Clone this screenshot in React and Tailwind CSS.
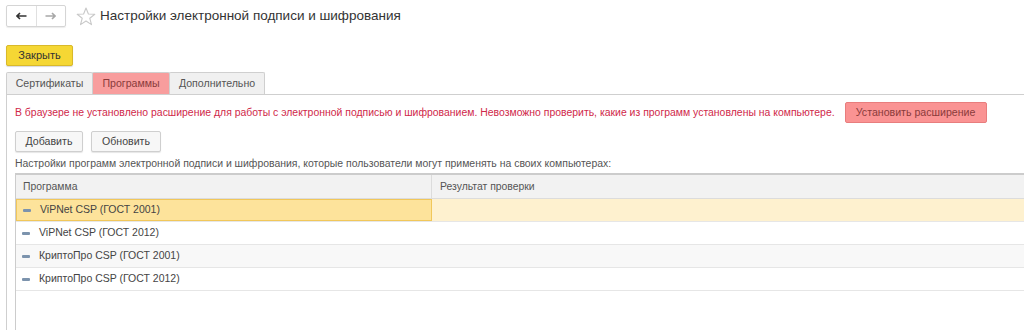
import { useState } from "react";

const programs = [
  "ViPNet CSP (ГОСТ 2001)",
  "ViPNet CSP (ГОСТ 2012)",
  "КриптоПро CSP (ГОСТ 2001)",
  "КриптоПро CSP (ГОСТ 2012)",
];

function Star() {
  return (
    <svg width="20" height="19" viewBox="0 0 20 19" className="shrink-0">
      <path
        d="M10 1 L12.4 7 L18.8 7.3 L13.8 11.3 L15.5 17.6 L10 14 L4.5 17.6 L6.2 11.3 L1.2 7.3 L7.6 7 Z"
        fill="none"
        stroke="#c9c9c9"
        strokeWidth="1.1"
        strokeLinejoin="round"
      />
    </svg>
  );
}

export default function App() {
  const [tab, setTab] = useState(1);
  const [selected, setSelected] = useState(0);
  const tabs = ["Сертификаты", "Программы", "Дополнительно"];

  return (
    <div className="w-[1024px] h-[330px] overflow-hidden bg-white text-[#4d4d4d] font-['Liberation_Sans',Arial,sans-serif]">
      {/* Header */}
      <div className="flex items-center h-[32px] pl-[6px]">
        <div className="flex h-[22px] w-[60px] border border-[#d5d5d5] rounded-[2px] shadow-[0_1px_1px_rgba(0,0,0,0.08)]">
          <button className="flex-1 flex items-center justify-center border-r border-[#e0e0e0]">
            <svg width="11" height="8" viewBox="0 0 11 8">
              <path d="M1 4 H10.5 M4 1 L1 4 L4 7" fill="none" stroke="#333" strokeWidth="1.6" />
            </svg>
          </button>
          <button className="flex-1 flex items-center justify-center">
            <svg width="11" height="8" viewBox="0 0 11 8">
              <path d="M0.5 4 H10 M7 1 L10 4 L7 7" fill="none" stroke="#a8a8a8" strokeWidth="1.6" />
            </svg>
          </button>
        </div>
        <div className="ml-[10px]">
          <Star />
        </div>
        <h1 className="ml-[4px] text-[13.5px] text-[#333] leading-none">
          Настройки электронной подписи и шифрования
        </h1>
      </div>

      {/* Close */}
      <div className="flex pl-[6px] mt-[13px]">
        <button className="h-[21px] w-[67px] rounded-[2px] border border-[#d9b92a] bg-[#f5d734] text-[11px] text-[#333] shadow-[0_1px_1px_rgba(0,0,0,0.15)]">
          Закрыть
        </button>
      </div>

      {/* Tabs */}
      <div className="flex pl-[6px] mt-[6px] h-[22px]">
        {tabs.map((t, i) => (
          <button
            key={t}
            onClick={() => setTab(i)}
            className={
              "h-[22px] border border-b-0 border-[#cfcfcf] text-[10.6px] -ml-px first:ml-0 rounded-t-[2px] " +
              (i === 1
                ? "bg-[#f89d9d] text-[#8a3b3b] w-[78px]"
                : i === 0
                ? "bg-[#f0f0f0] text-[#555] w-[87px]"
                : "bg-[#f0f0f0] text-[#555] w-[96px]")
            }
          >
            {t}
          </button>
        ))}
      </div>

      {/* Panel */}
      <div className="ml-[6px] border-l border-t border-[#cfcfcf] pl-[8px] pt-[7px] h-[240px]">
        <div className="flex items-center h-[21px] whitespace-nowrap">
          <span className="text-[10.45px] text-[#d0284a]">
            В браузере не установлено расширение для работы с электронной подписью и шифрованием. Невозможно проверить, какие из программ установлены на компьютере.
          </span>
          <button className="ml-[10px] h-[21px] w-[142px] shrink-0 rounded-[2px] border border-[#e87d7d] bg-[#fa9393] text-[10.6px] text-[#8a3b3b]">
            Установить расширение
          </button>
        </div>

        <div className="flex gap-[8px] mt-[8px]">
          <button className="h-[21px] w-[68px] rounded-[2px] border border-[#cfcfcf] bg-[#f7f7f7] text-[10.6px] text-[#444] shadow-[0_1px_1px_rgba(0,0,0,0.1)]">
            Добавить
          </button>
          <button className="h-[21px] w-[70px] rounded-[2px] border border-[#cfcfcf] bg-[#f7f7f7] text-[10.6px] text-[#444] shadow-[0_1px_1px_rgba(0,0,0,0.1)]">
            Обновить
          </button>
        </div>

        <div className="mt-[5px] text-[10.45px] text-[#555] leading-[14px] whitespace-nowrap">
          Настройки программ электронной подписи и шифрования, которые пользователи могут применять на своих компьютерах:
        </div>

        {/* Table */}
        <div className="mt-[2px] border-l border-t-2 border-[#cccccc] h-[170px]">
          <div className="flex h-[24px] bg-[#f2f2f2] border-b border-[#dcdcdc] text-[10.4px] text-[#555]">
            <div className="w-[416px] flex items-center pl-[7px] border-r border-[#dcdcdc]">Программа</div>
            <div className="flex-1 flex items-center pl-[8px]">Результат проверки</div>
          </div>
          {programs.map((p, i) => {
            const sel = i === selected;
            return (
              <div
                key={p}
                onClick={() => setSelected(i)}
                className={
                  "flex h-[23px] border-b border-[#e6e6e6] text-[10.5px] text-[#444] " +
                  (sel ? "bg-[#fef1cf]" : i % 2 === 0 ? "bg-[#f8f8f8]" : "bg-white")
                }
              >
                <div
                  className={
                    "w-[416px] flex items-center pl-[6px] " +
                    (sel ? "bg-[#fde39b] border border-[#f1c75a] pl-[5px]" : "")
                  }
                >
                  <span className="w-[8px] h-[3px] rounded-[1px] bg-[#7c93ad] mr-[9px]" />
                  {p}
                </div>
                <div className="flex-1" />
              </div>
            );
          })}
        </div>
      </div>
    </div>
  );
}
